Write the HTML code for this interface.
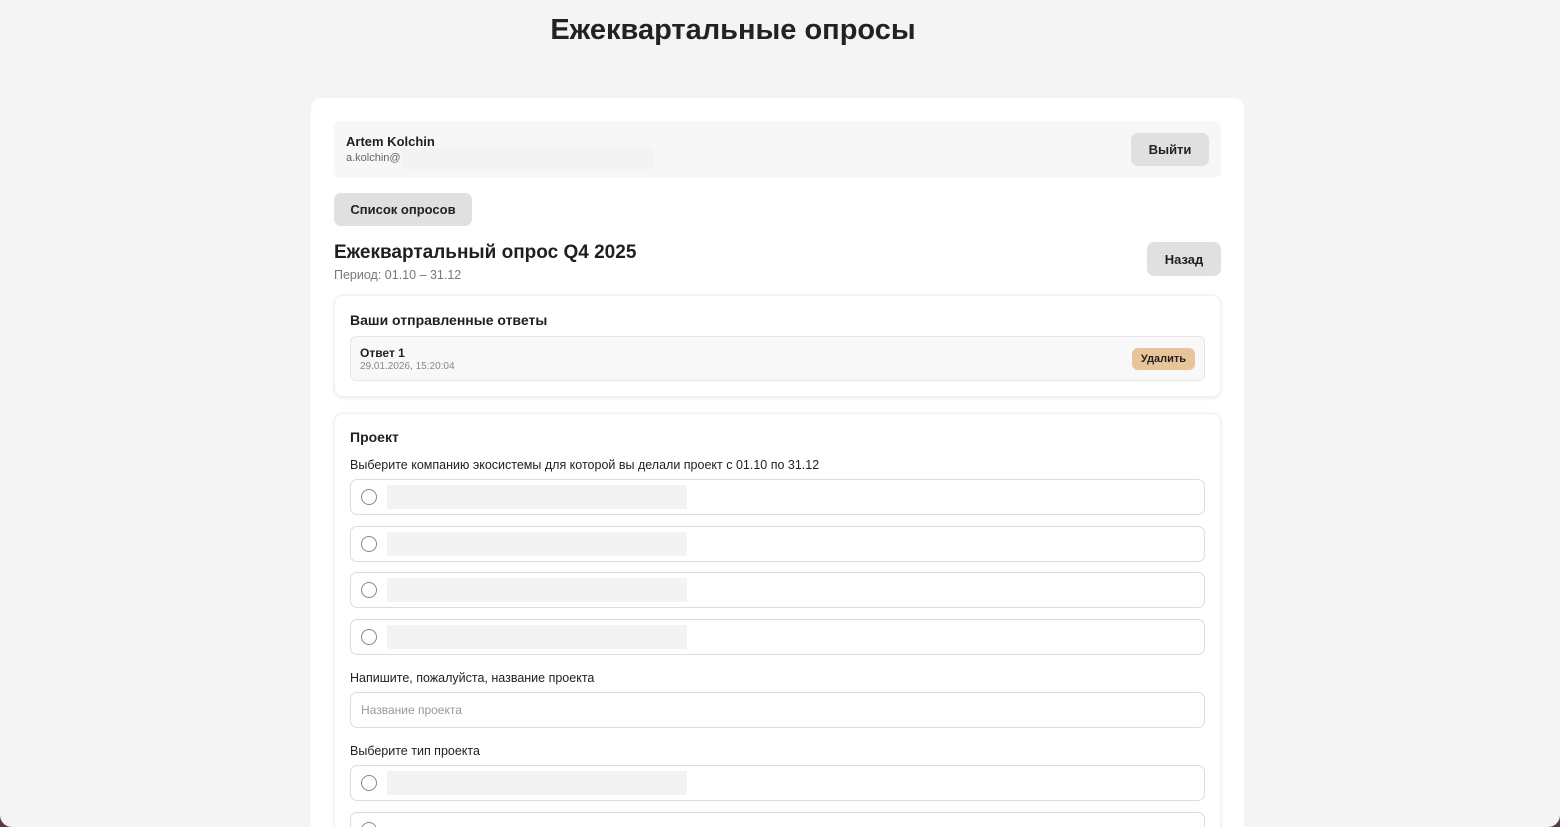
<!DOCTYPE html>
<html style="width:1560px;height:827px;overflow:hidden"><head><meta charset="utf-8"><style>
*{box-sizing:border-box;margin:0;padding:0}
body{width:1560px;height:827px;overflow:hidden;background:#5a3d3f;font-family:"Liberation Sans",sans-serif;color:#1f1f1f;position:relative}
.win{position:absolute;left:0;top:0;width:1560px;height:827px;background:#f4f4f4;border-radius:0 0 12px 12px;overflow:hidden}
.a{position:absolute}
.h1{left:0;width:1466px;text-align:center;top:14px;font-size:29px;font-weight:bold;color:#222}
.card{left:311px;top:98px;width:933px;height:729px;background:#fff;border-radius:10px 10px 0 0}
.btn{background:#e0e0e0;border-radius:7px;font-weight:bold;font-size:13px;display:flex;align-items:center;justify-content:center;color:#222}
.box{background:#fff;border-radius:9px;box-shadow:0 1px 4px rgba(0,0,0,.09);border:1px solid #f0f0f0}
.opt{left:350px;width:855px;height:36px;border:1.5px solid #dcdcdc;border-radius:7px;background:#fff}
.opt i{position:absolute;left:10px;top:9px;width:16px;height:16px;border:1.3px solid #888;border-radius:50%}
.opt b{position:absolute;left:36px;top:5px;width:300px;height:24px;background:#f3f3f3}
.lbl{left:350px;font-size:12.5px;color:#222}
</style></head><body>
<div class="win">
<div class="a h1">Ежеквартальные опросы</div>
<div class="a card"></div>
<div class="a" style="left:334px;top:121px;width:887px;height:57px;background:#f7f7f7;border-radius:7px"></div>
<div class="a" style="left:346px;top:134px;font-size:13px;font-weight:bold">Artem Kolchin</div>
<div class="a" style="left:346px;top:152px;font-size:11px;color:#666">a.kolchin@</div>
<div class="a" style="left:401px;top:148px;width:253px;height:21px;background:#f3f3f3"></div>
<div class="a btn" style="left:1131px;top:133px;width:78px;height:33px">Выйти</div>
<div class="a btn" style="left:334px;top:193px;width:138px;height:33px">Список опросов</div>
<div class="a" style="left:334px;top:242px;font-size:19px;font-weight:bold">Ежеквартальный опрос Q4 2025</div>
<div class="a" style="left:334px;top:268px;font-size:12.5px;color:#777">Период: 01.10 – 31.12</div>
<div class="a btn" style="left:1147px;top:242px;width:74px;height:34px">Назад</div>
<div class="a box" style="left:334px;top:295px;width:887px;height:102px"></div>
<div class="a" style="left:350px;top:312px;font-size:14px;font-weight:bold">Ваши отправленные ответы</div>
<div class="a" style="left:350px;top:336px;width:855px;height:45px;background:#f8f8f8;border:1px solid #e6e6e6;border-radius:6px"></div>
<div class="a" style="left:360px;top:346px;font-size:12px;font-weight:bold">Ответ 1</div>
<div class="a" style="left:360px;top:361px;font-size:10px;color:#888">29.01.2026, 15:20:04</div>
<div class="a" style="left:1132px;top:348px;width:63px;height:22px;background:#e8c49a;border-radius:6px;font-size:11px;font-weight:bold;display:flex;align-items:center;justify-content:center">Удалить</div>
<div class="a box" style="left:334px;top:413px;width:887px;height:414px;border-bottom:none;border-radius:9px 9px 0 0"></div>
<div class="a" style="left:350px;top:429px;font-size:14px;font-weight:bold">Проект</div>
<div class="a lbl" style="top:458px">Выберите компанию экосистемы для которой вы делали проект с 01.10 по 31.12</div>
<div class="a opt" style="top:479px"><i></i><b></b></div>
<div class="a opt" style="top:526px"><i></i><b></b></div>
<div class="a opt" style="top:572px"><i></i><b></b></div>
<div class="a opt" style="top:619px"><i></i><b></b></div>
<div class="a lbl" style="top:671px">Напишите, пожалуйста, название проекта</div>
<div class="a opt" style="top:692px"><span style="position:absolute;left:10px;top:10px;font-size:12px;color:#999">Название проекта</span></div>
<div class="a lbl" style="top:744px">Выберите тип проекта</div>
<div class="a opt" style="top:765px"><i></i><b></b></div>
<div class="a opt" style="top:812px;height:15px;border-bottom:none;border-radius:7px 7px 0 0"><i style="height:8px;border-bottom:none;border-radius:8px 8px 0 0"></i></div>
</div>
</body></html>
